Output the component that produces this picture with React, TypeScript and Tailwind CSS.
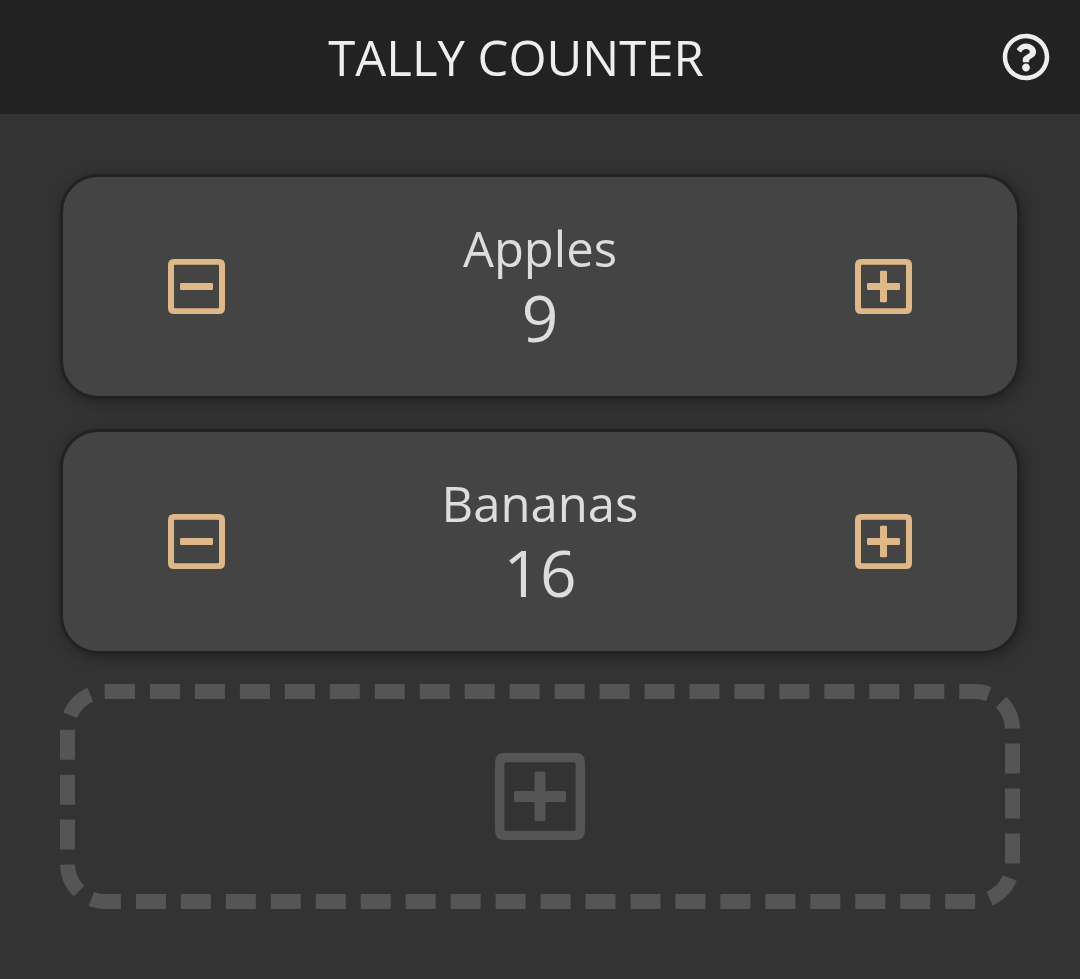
import { useState } from 'react';
import { FaRegQuestionCircle } from 'react-icons/fa';

function SquareIcon({ plus = false, className }: { plus?: boolean; className: string }) {
  return (
    <svg viewBox="0 0 57 55" className={className} fill="currentColor" aria-hidden="true">
      <path
        fillRule="evenodd"
        d="M6 0H51Q57 0 57 6V49Q57 55 51 55H6Q0 55 0 49V6Q0 0 6 0ZM7 5.8Q6 5.8 6 6.8V48.2Q6 49.2 7 49.2H50Q51 49.2 51 48.2V6.8Q51 5.8 50 5.8Z"
      />
      <rect x="12" y="24" width="33" height="7" rx="1.3" />
      {plus && <rect x="25" y="11.7" width="7" height="31.5" rx="1.3" />}
    </svg>
  );
}

function Counter({ name, initial }: { name: string; initial: number }) {
  const [count, setCount] = useState(initial);
  return (
    <section
      aria-label={name}
      className="flex h-[225px] items-center justify-between rounded-[38px] border-[3px] border-[#222] bg-[#444] px-[105px] shadow-[3px_3px_15px_rgba(0,0,0,0.35)]"
    >
      <button type="button" aria-label={`Decrease ${name}`} className="text-[#deb887]" onClick={() => setCount(count - 1)}>
        <SquareIcon className="h-[55px] w-[57px]" />
      </button>
      <div className="pb-[3px] text-center text-[#ddd]">
        <h2 className="text-[49px] leading-[66px]">{name}</h2>
        <p className="text-[64px] leading-[74px]">{count}</p>
      </div>
      <button type="button" aria-label={`Increase ${name}`} className="text-[#deb887]" onClick={() => setCount(count + 1)}>
        <SquareIcon plus className="h-[55px] w-[57px]" />
      </button>
    </section>
  );
}

export default function App() {
  return (
    <div className="min-h-screen bg-[#333] font-['Open_Sans','Noto_Sans',sans-serif] font-normal">
      <header className="flex h-[114px] items-center bg-[#222] px-[30px] text-[#eee]">
        <h1 className="flex-1 text-center text-[49px] leading-[66px]">TALLY COUNTER</h1>
        <button type="button" aria-label="Help">
          <FaRegQuestionCircle className="size-[48px]" />
        </button>
      </header>
      <main className="flex flex-col gap-[30px] p-[60px]">
        <Counter name="Apples" initial={9} />
        <Counter name="Bananas" initial={16} />
        <button
          type="button"
          aria-label="Add counter"
          className="flex h-[225px] items-center justify-center rounded-[45px] border-[15px] border-dashed border-[#555] text-[#555]"
        >
          <SquareIcon plus className="h-[87px] w-[90px]" />
        </button>
      </main>
    </div>
  );
}
